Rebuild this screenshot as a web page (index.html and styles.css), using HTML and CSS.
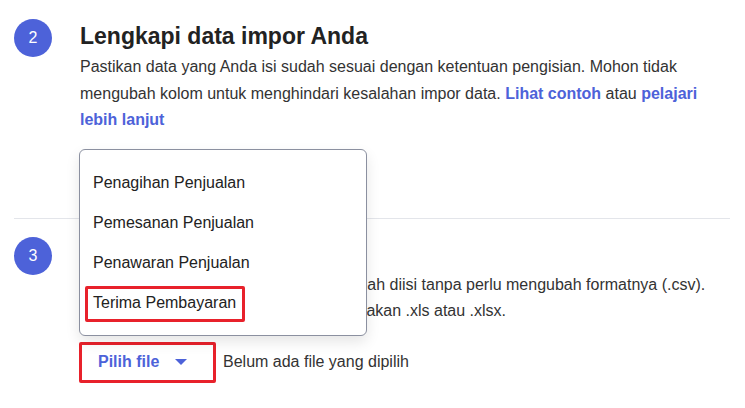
FILE: index.html
```html
<!DOCTYPE html>
<html lang="id">
<head>
<meta charset="utf-8">
<title>Impor Data</title>
<link rel="stylesheet" href="styles.css">
</head>
<body>
<main class="steps">
  <section class="step step-first">
    <div class="badge">2</div>
    <div class="step-body">
      <h2 class="step-title">Lengkapi data impor Anda</h2>
      <p class="step-text">Pastikan data yang Anda isi sudah sesuai dengan ketentuan pengisian. Mohon tidak mengubah kolom untuk menghindari kesalahan impor data. <a class="link" href="#">Lihat contoh</a> atau <a class="link" href="#">pelajari lebih lanjut</a></p>
      <ul class="dropdown">
        <li class="dropdown-item">Penagihan Penjualan</li>
        <li class="dropdown-item">Pemesanan Penjualan</li>
        <li class="dropdown-item">Penawaran Penjualan</li>
        <li class="dropdown-item"><span class="marked">Terima Pembayaran</span></li>
      </ul>
    </div>
  </section>
  <hr class="divider">
  <section class="step step-second">
    <div class="badge">3</div>
    <div class="step-body">
      <h2 class="step-title">Unggah file impor Anda</h2>
      <p class="step-text">Unggah file templat impor data yang sudah diisi tanpa perlu mengubah formatnya (.csv). Anda juga bisa mengimpor file menggunakan .xls atau .xlsx.</p>
      <div class="file-row">
        <button class="file-btn" type="button"><span class="file-label">Pilih file</span><span class="caret"></span></button>
        <span class="file-status">Belum ada file yang dipilih</span>
      </div>
    </div>
  </section>
</main>
</body>
</html>
```
FILE: styles.css
```css
* { box-sizing: border-box; }
html, body { margin: 0; background: #fff; }
body {
  font-family: "Liberation Sans", Arial, sans-serif;
  color: #333;
  font-size: 16px;
}
.steps { width: 745px; }
.step {
  display: flex;
  gap: 28px;
  padding-left: 14px;
  padding-right: 15px;
}
.step-first { padding-top: 19px; padding-bottom: 84px; }
.step-second { padding-top: 18px; }
.badge {
  flex: 0 0 38px;
  width: 38px;
  height: 38px;
  border-radius: 50%;
  background: #4d62d9;
  color: #fff;
  font-size: 16px;
  display: flex;
  align-items: center;
  justify-content: center;
}
.step-body {
  position: relative;
  flex: 1;
  padding-top: 4px;
}
.step-title {
  margin: 0;
  font-size: 23px;
  line-height: 26px;
  font-weight: 700;
  color: #222;
}
.step-text {
  margin: 5px 0 0;
  line-height: 26.5px;
  color: #333;
}
.link {
  color: #4d62d9;
  font-weight: 700;
  text-decoration: none;
}
.divider {
  margin: 0 15px 0 14px;
  border: 0;
  border-top: 1px solid #e3e5ea;
  height: 0;
}
.dropdown {
  position: absolute;
  z-index: 5;
  left: -1px;
  top: 130px;
  width: 288px;
  height: 187px;
  margin: 0;
  padding: 13px 0 0;
  list-style: none;
  background: #fff;
  border: 1px solid #8b90a0;
  border-radius: 6px;
  box-shadow: 0 6px 14px rgba(0, 0, 0, 0.10);
}
.dropdown-item {
  height: 40px;
  padding: 10px 13px;
  line-height: 20px;
  color: #222;
  white-space: nowrap;
}
.marked {
  display: inline-block;
  margin: -7px 0 -9px -8px;
  padding: 4px 6px 6px 5px;
  border: 3px solid #e8212b;
  border-radius: 2px;
  line-height: 20px;
}
.file-row {
  display: flex;
  align-items: center;
  margin-top: 17px;
}
.file-btn {
  display: flex;
  align-items: center;
  gap: 16px;
  height: 41px;
  width: 137px;
  margin-left: -1px;
  padding: 0 0 0 16px;
  border: 3px solid #e8212b;
  border-radius: 2px;
  background: #fff;
  font-family: inherit;
  font-size: 16px;
  font-weight: 700;
  color: #4d62d9;
  cursor: pointer;
}
.caret {
  width: 0;
  height: 0;
  border-left: 6px solid transparent;
  border-right: 6px solid transparent;
  border-top: 6px solid #4d62d9;
}
.file-status {
  margin-left: 7px;
  color: #333;
}
```
